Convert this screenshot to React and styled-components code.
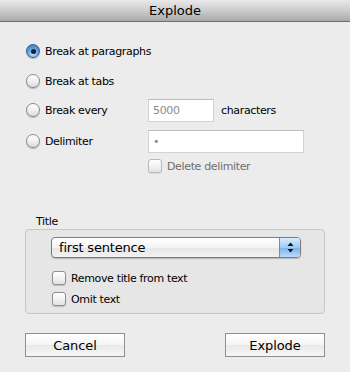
import React from 'react'
import styled, { createGlobalStyle } from 'styled-components'

const Global = createGlobalStyle`
  html, body { margin: 0; padding: 0; background: #ececec; }
  body { font-family: "DejaVu Sans", "Liberation Sans", sans-serif; }
`

const Window = styled.div`
  width: 350px;
  height: 372px;
  background: #ececec;
  display: flex;
  flex-direction: column;
  color: #000;
  font-size: 11px;
  letter-spacing: -0.35px;
  overflow: hidden;
`

const TitleBar = styled.div`
  height: 21px;
  border-bottom: 1px solid #6e6e6e;
  background: linear-gradient(#e9e9e9, #c9c9c9 55%, #a9a9a9);
  display: flex;
  align-items: center;
  justify-content: center;
  font-size: 13px;
  letter-spacing: 0;
`

const Body = styled.div`
  padding: 17px 25px 0 26px;
  display: flex;
  flex-direction: column;
`

const Row = styled.div`
  display: flex;
  align-items: center;
  height: ${p => p.$h || 24}px;
  margin-top: ${p => p.$top || 0}px;
`

const Choice = styled.label`
  width: 122px;
  flex: none;
  white-space: nowrap;
  display: flex;
  align-items: center;
  gap: 5px;
`

const Radio = styled.span`
  width: 14px;
  height: 14px;
  box-sizing: border-box;
  border-radius: 50%;
  flex: none;
  display: flex;
  align-items: center;
  justify-content: center;
  border: 1px solid ${p => (p.$on ? '#3b5f8c' : '#8a8a8a')};
  background: ${p =>
    p.$on
      ? 'radial-gradient(circle at 50% 75%, #bfe3ff, #6aa6e0 45%, #2e6cb5 100%)'
      : 'linear-gradient(#ffffff, #f0f0f0 50%, #dcdcdc)'};
  box-shadow: 0 1px 1px rgba(0, 0, 0, 0.25);
  &::after {
    content: '';
    display: ${p => (p.$on ? 'block' : 'none')};
    width: 5px;
    height: 5px;
    border-radius: 50%;
    background: #10203a;
  }
`

const Field = styled.div`
  box-sizing: border-box;
  width: ${p => p.$w}px;
  height: 23px;
  background: #fff;
  border: 1px solid #d2d2d2;
  border-top-color: #bdbdbd;
  display: flex;
  align-items: center;
  padding-left: 4px;
  color: #8c8c8c;
  font-size: 11px;
`

const After = styled.span`
  margin-left: 7px;
`

const Check = styled.span`
  width: 14px;
  height: 14px;
  box-sizing: border-box;
  flex: none;
  border-radius: 3px;
  border: 1px solid ${p => (p.$off ? '#b8b8b8' : '#8e8e8e')};
  background: linear-gradient(#ffffff, #f2f2f2 50%, #e2e2e2);
  box-shadow: 0 1px 1px rgba(0, 0, 0, ${p => (p.$off ? 0.08 : 0.18)});
`

const CheckLine = styled.label`
  display: flex;
  align-items: center;
  gap: 5px;
  height: 14px;
  white-space: nowrap;
  margin-left: ${p => p.$left || 0}px;
  margin-top: ${p => p.$top || 0}px;
  color: ${p => (p.$off ? '#6e6e6e' : '#000')};
`

const GroupTitle = styled.div`
  margin: 42px 0 0 10px;
  line-height: 14px;
`

const Group = styled.div`
  box-sizing: border-box;
  width: 300px;
  height: 85px;
  margin: 0 0 0 -1px;
  border: 1px solid #c6c6c6;
  border-radius: 4px;
  background: #e6e6e6;
  padding: 7px 0 0 25px;
  display: flex;
  flex-direction: column;
`

const Popup = styled.div`
  box-sizing: border-box;
  width: 250px;
  height: 21px;
  border: 1px solid #7c7c7c;
  border-radius: 4px;
  background: linear-gradient(#ffffff, #f3f3f3 50%, #e6e6e6 51%, #f2f2f2);
  box-shadow: 0 1px 1px rgba(0, 0, 0, 0.2);
  display: flex;
  align-items: stretch;
  overflow: hidden;
  margin-bottom: 13px;
`

const PopupText = styled.span`
  flex: 1;
  display: flex;
  align-items: center;
  padding-left: 7px;
  font-size: 13px;
  letter-spacing: -0.2px;
`

const Stepper = styled.span`
  width: 20px;
  border-left: 1px solid #6f8fb8;
  background: linear-gradient(#d6ecff, #9fcaf3 50%, #79b2ea 51%, #b9dcfb);
  display: flex;
  align-items: center;
  justify-content: center;
`

const Buttons = styled.div`
  display: flex;
  justify-content: space-between;
  margin: 19px 0 0 -1px;
  width: 300px;
`

const Button = styled.button`
  box-sizing: border-box;
  width: 100px;
  height: 24px;
  border: 1px solid #8f8f8f;
  border-radius: 0;
  background: linear-gradient(#ffffff, #f4f4f4 50%, #e9e9e9 51%, #f6f6f6);
  font-family: inherit;
  font-size: 13px;
  letter-spacing: -0.1px;
  color: #000;
  padding: 0;
`

function Arrows() {
  return (
    <svg width="7" height="11" viewBox="0 0 7 11">
      <path d="M3.5 0.5 L6.5 4 L0.5 4 Z" fill="#111" />
      <path d="M3.5 10.5 L6.5 7 L0.5 7 Z" fill="#111" />
    </svg>
  )
}

export default function App() {
  return (
    <Window>
      <Global />
      <TitleBar>Explode</TitleBar>
      <Body>
        <Row>
          <Choice><Radio $on />Break at paragraphs</Choice>
        </Row>
        <Row $top={6}>
          <Choice><Radio />Break at tabs</Choice>
        </Row>
        <Row $top={5}>
          <Choice><Radio />Break every</Choice>
          <Field $w={66}>5000</Field>
          <After>characters</After>
        </Row>
        <Row $top={7}>
          <Choice><Radio />Delimiter</Choice>
          <Field $w={156}>•</Field>
        </Row>
        <CheckLine $left={122} $top={6} $off>
          <Check $off />Delete delimiter
        </CheckLine>
        <GroupTitle>Title</GroupTitle>
        <Group>
          <Popup>
            <PopupText>first sentence</PopupText>
            <Stepper><Arrows /></Stepper>
          </Popup>
          <CheckLine $left={1}>
            <Check />Remove title from text
          </CheckLine>
          <CheckLine $left={1} $top={7}>
            <Check />Omit text
          </CheckLine>
        </Group>
        <Buttons>
          <Button>Cancel</Button>
          <Button>Explode</Button>
        </Buttons>
      </Body>
    </Window>
  )
}
